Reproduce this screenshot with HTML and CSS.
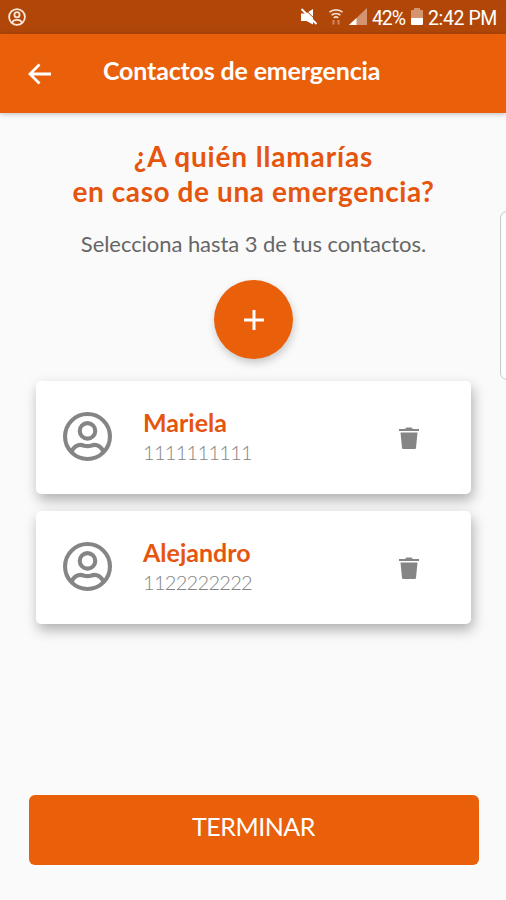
FILE: index.html
```html
<!DOCTYPE html>
<html lang="es">
<head>
    <meta charset="UTF-8">
    <meta name="viewport" content="width=device-width, initial-scale=1.0">
    <title>Contactos de emergencia</title>
    <link rel="stylesheet" href="styles.css">
</head>
<body>
    <div class="statusbar">
        <svg class="icon-user" viewBox="0 0 18 18"><circle cx="9" cy="9" r="7.9"/><circle cx="9" cy="6.8" r="2.6"/><path d="M4 14.8c1-2.6 3-2.9 5-2.9s4 .3 5 2.9"/></svg>
        <div class="status-right">
            <svg class="icon-mute" viewBox="0 0 18 18"><path d="M1 5.500h5L13 1v15.500L6.500 13H1z"/><path class="cut" d="M3.500 0l14.500 14"/><path class="slash" d="M1.500 1l15 15"/></svg>
            <svg class="icon-wifi" viewBox="0 0 16 18"><path d="M1.5 4.200C5 1 11 1 14.500 4.200M3.600 7.200c2.600-2.300 6.200-2.300 8.800 0M5.800 9.800c1.300-1.100 3.100-1.100 4.400 0"/><path class="arrows" d="M5.500 12v4.500M10.500 12v4.500"/></svg>
            <svg class="icon-signal" viewBox="0 0 18 18"><path class="dim" d="M18 0v17H0z"/><path d="M7.500 10v7H0z"/></svg>
            <span class="percent">42%</span>
            <svg class="icon-battery" viewBox="0 0 12 18"><path class="dim" d="M0 3q0-1 1-1h2V0h6v2h2q1 0 1 1v7H0z"/><path d="M0 10h12v6q0 1-1 1H1q-1 0-1-1z"/></svg>
            <span class="time">2:42 PM</span>
        </div>
    </div>
    <header class="toolbar">
        <svg class="back" viewBox="0 0 24 22"><path d="M23 11H2.500M11.500 1.500L2 11l9.500 9.500"/></svg>
        <h1>Contactos de emergencia</h1>
    </header>
    <main>
        <h2><span class="line-one">¿A quién llamarías</span><br><span class="line-two">en caso de una emergencia?</span></h2>
        <p class="subtitle">Selecciona hasta 3 de tus contactos.</p>
        <button class="add" aria-label="Agregar">
            <svg viewBox="0 0 20 20"><path d="M10 0v20M0 10h20"/></svg>
        </button>
        <div class="card">
            <svg class="avatar" viewBox="0 0 48 48"><circle cx="24" cy="24" r="22"/><circle cx="24" cy="18.500" r="7.600"/><path d="M8.500 38.500C12 31 18 32 20 32.800Q24 34 28 32.800C30 32 36 31 39.500 38.500"/></svg>
            <div class="info">
                <h3>Mariela</h3>
                <p>1111111111</p>
            </div>
            <svg class="trash" viewBox="0 0 20 22"><path d="M0 2h6l1.500-1.500h5L14 2h6v2H0zM1.500 5.500h17L17 21q-.2 1-1.200 1H4.200q-1 0-1.200-1z"/></svg>
        </div>
        <div class="card">
            <svg class="avatar" viewBox="0 0 48 48"><circle cx="24" cy="24" r="22"/><circle cx="24" cy="18.500" r="7.600"/><path d="M8.500 38.500C12 31 18 32 20 32.800Q24 34 28 32.800C30 32 36 31 39.500 38.500"/></svg>
            <div class="info">
                <h3>Alejandro</h3>
                <p>1122222222</p>
            </div>
            <svg class="trash" viewBox="0 0 20 22"><path d="M0 2h6l1.500-1.500h5L14 2h6v2H0zM1.500 5.500h17L17 21q-.2 1-1.200 1H4.200q-1 0-1.200-1z"/></svg>
        </div>
    </main>
    <button class="finish">TERMINAR</button>
    <div class="edge-handle"></div>
</body>
</html>
```
FILE: styles.css
```css
*{ box-sizing: border-box; margin:0; padding:0;}
body{
    position:relative;
    height:900px;
    overflow:hidden;
    display:flex;
    flex-direction:column;
    background:#fafafa;
    font-family:Lato, "Open Sans", sans-serif;
}
svg{
    display:block;
    fill:none;
    flex:none;
}
button{
    border:0;
    font-family:inherit;
}
.statusbar{
    height:34px;
    padding:0 9px 0 8px;
    display:flex;
    align-items:center;
    justify-content: space-between;
    background:#b04708;
    color:#fff;
    font-family:Roboto, sans-serif;
    font-size:19.5px;
}
.icon-user{
    width:18px;
    height:18px;
    stroke:#fbe6dc;
    stroke-width:1.8;
}
.status-right{
    display:flex;
    align-items:center;
}
.status-right svg{
    fill:#fff;
    height:18px;
}
.status-right span{
    padding-top:2px;
}
.icon-mute{
    width:18px;
    margin-right:10px;
}
.icon-mute .cut{
    stroke:#b04708;
    stroke-width:1;
}
.icon-mute .slash{
    stroke:#fff;
    stroke-width:2;
}
.status-right .icon-wifi{
    width:16px;
    margin-right:5px;
    fill:none;
    stroke:#f6ddcf;
    stroke-width:1.7;
}
.icon-wifi .arrows{
    stroke:#cf8b66;
    stroke-width:2;
}
.icon-signal{
    width:18px;
    margin-right:5px;
}
.dim{
    fill:#d3946f;
}
.percent{
    width:39px;
    letter-spacing:-1.1px;
}
.icon-battery{
    width:12px;
    margin-right:5px;
}
.time{
    width:69px;
    letter-spacing:-.4px;
    white-space:nowrap;
}
.toolbar{
    height:79px;
    padding-left:28px;
    display:flex;
    align-items:center;
    background:#e95f0a;
    color:#fff;
    box-shadow:0 1px 5px rgba(0,0,0,.25);
}
.back{
    width:24px;
    height:22px;
    margin-right:51px;
    stroke:#fff;
    stroke-width:2.8;
}
h1{
    font-size:25px;
    line-height:30px;
    letter-spacing:-.17px;
    margin-bottom:7px;
    white-space:nowrap;
}
main{
    display:flex;
    flex-direction:column;
    align-items:center;
    padding:26px 35px 0 36px;
}
h2{
    font-size:28px;
    line-height:35px;
    color:#e6550d;
    text-align:center;
    white-space:nowrap;
}
.line-one{
    letter-spacing:.85px;
}
.line-two{
    letter-spacing:.6px;
}
.subtitle{
    margin-top:20px;
    font-size:22px;
    line-height:30px;
    letter-spacing:-.06px;
    color:#666;
    white-space:nowrap;
}
.add{
    width:79px;
    height:79px;
    margin:21px 0 22px;
    border-radius:50%;
    display:flex;
    align-items:center;
    justify-content:center;
    background:#e95f0a;
    box-shadow:1px 4px 8px rgba(0,0,0,.2);
}
.add svg{
    width:20px;
    height:20px;
    stroke:#fff;
    stroke-width:3;
}
.card{
    width:100%;
    height:113px;
    margin-bottom:17px;
    padding:0 52px 0 27px;
    display:flex;
    align-items:center;
    background:#fff;
    border-radius:5px;
    box-shadow:2px 6px 13px rgba(0,0,0,.3);
}
.avatar{
    width:49px;
    height:49px;
    margin-right:31px;
    margin-bottom:3px;
    stroke:#858585;
    stroke-width:4;
}
.info{
    flex:1;
    padding-bottom:2px;
}
h3{
    font-size:25px;
    line-height:30px;
    color:#e6550d;
}
.info p{
    font-size:20px;
    line-height:30px;
    letter-spacing:-.7px;
    color:#858585;
    font-weight:300;
}
.trash{
    width:20px;
    height:22px;
    margin-top:1px;
    fill:#858585;
}
.finish{
    width:450px;
    height:70px;
    margin:auto auto 35px 28.5px;
    padding-bottom:8px;
    border-radius:6px;
    background:#e95f0a;
    color:#fff;
    font-size:25px;
    letter-spacing:-.5px;
}
/* borde del panel lateral del telefono */
.edge-handle{
    position:absolute;
    top:211px;
    right:-8px;
    width:14px;
    height:169px;
    border:1px solid #c9c9c9;
    border-radius:7px;
    background:#fdfdfd;
}
```
